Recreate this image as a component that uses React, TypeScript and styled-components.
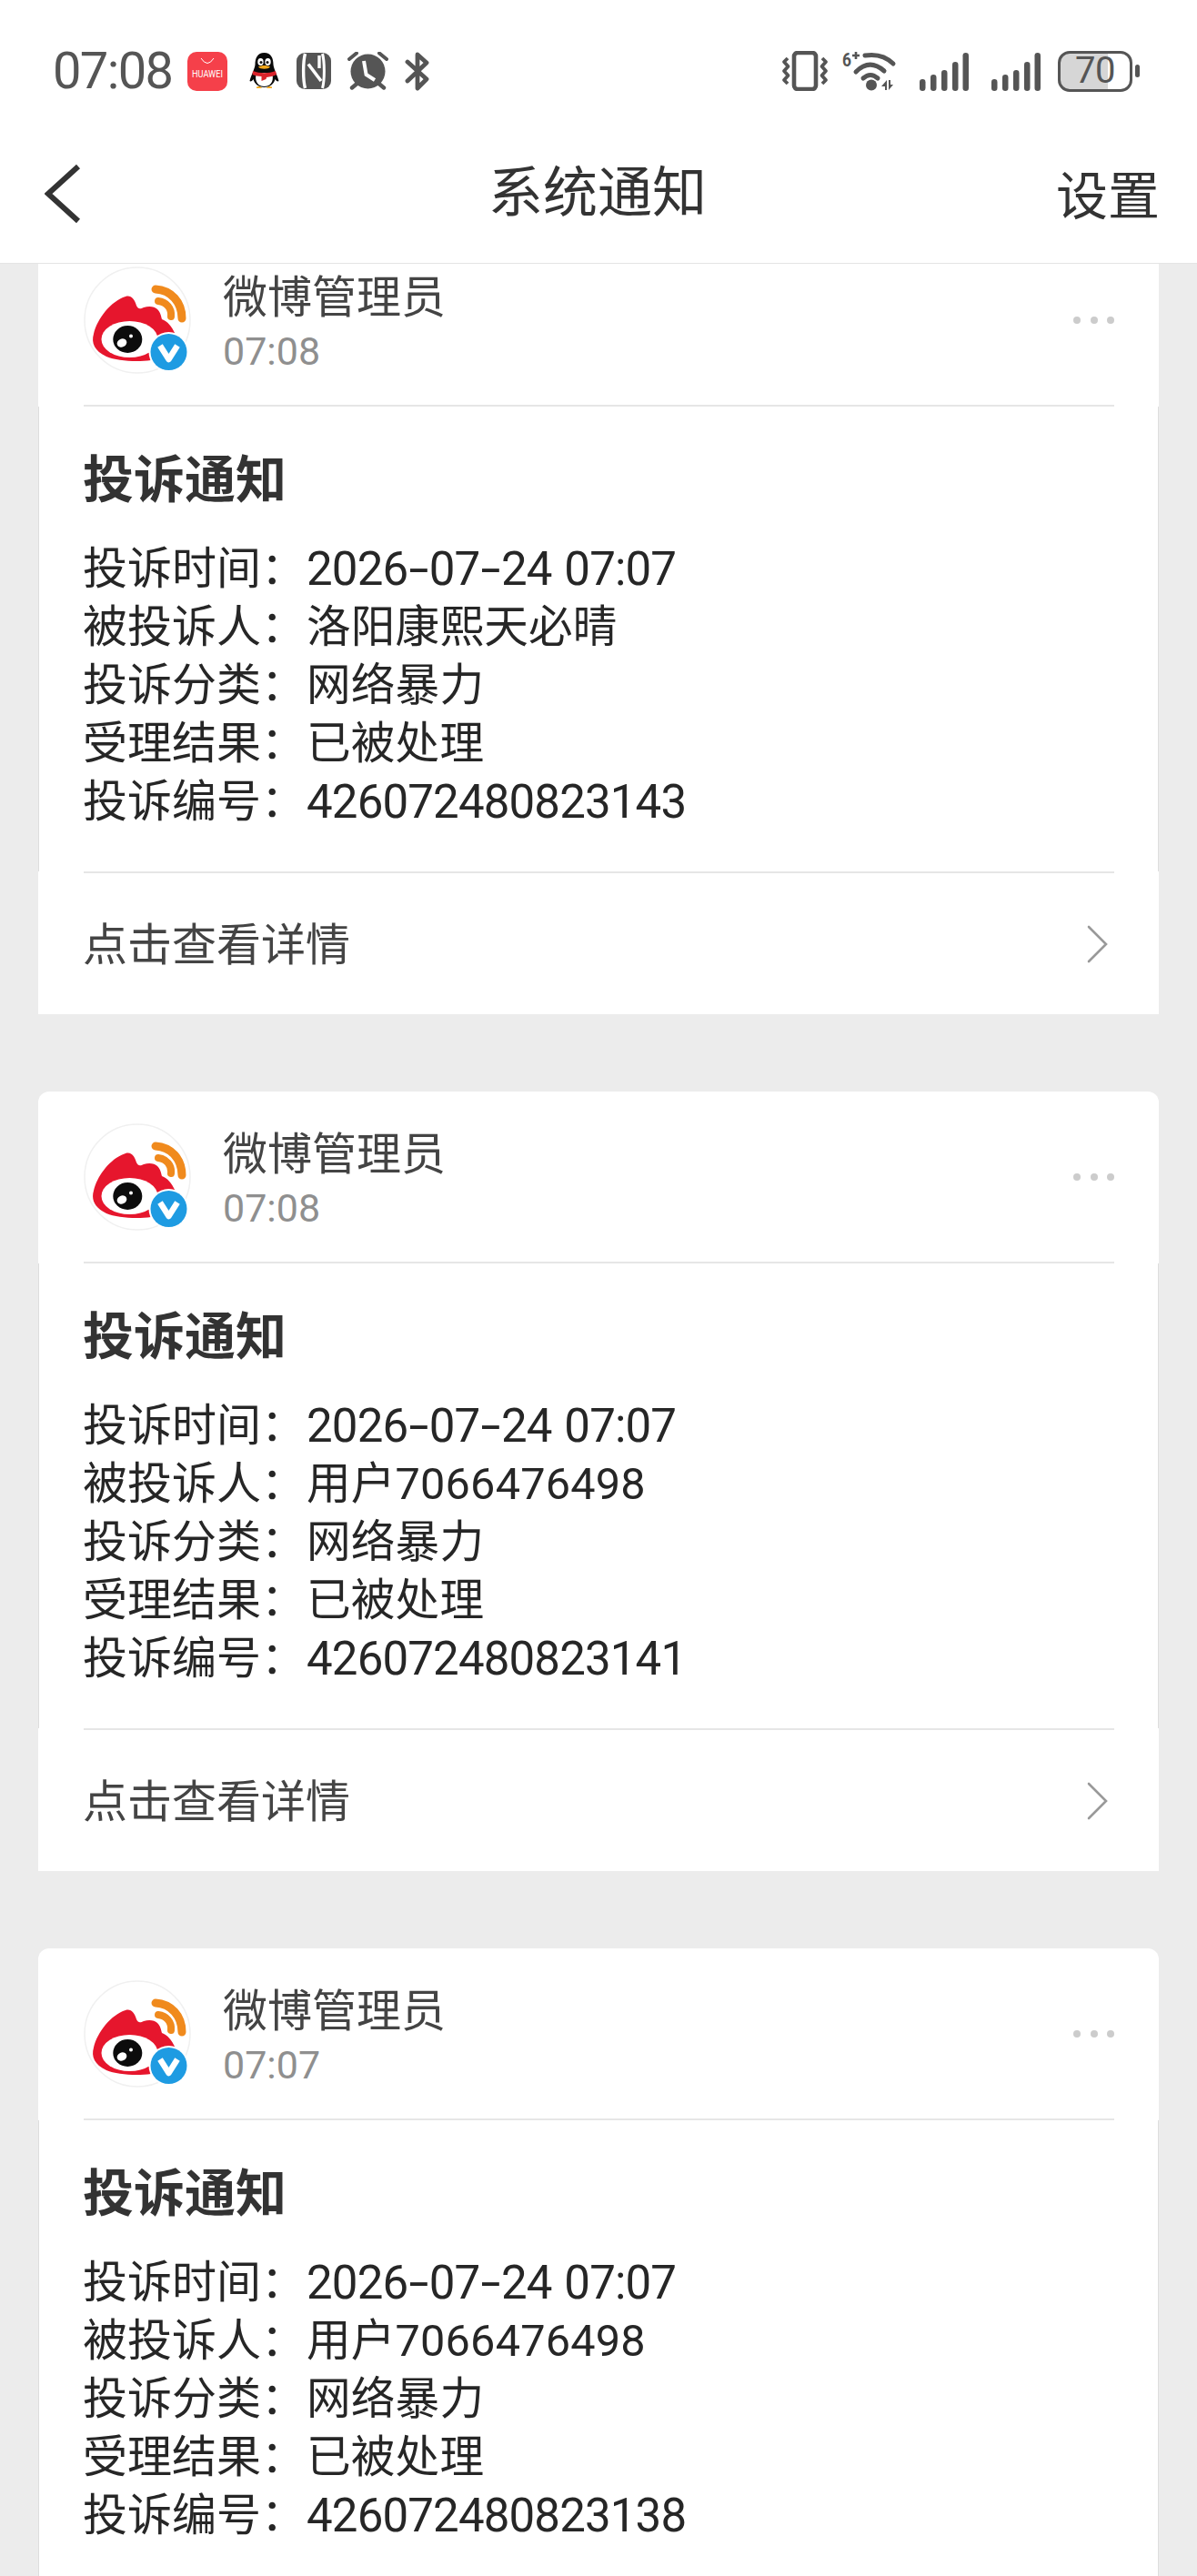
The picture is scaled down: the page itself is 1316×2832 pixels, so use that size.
import React from "react";
import styled, { createGlobalStyle } from "styled-components";

const ink = "#555555";

const GlobalStyle = createGlobalStyle`
  html, body {
    margin: 0;
    padding: 0;
    background: #ececec;
  }
  * {
    box-sizing: border-box;
  }
`;

const Page = styled.div`
  width: 1316px;
  height: 2832px;
  overflow: hidden;
  background: #ececec;
  font-family: Roboto, "Noto Sans CJK SC", sans-serif;
  color: #333333;
`;

const TopBar = styled.header`
  position: relative;
  z-index: 2;
  background: #ffffff;
  border-bottom: 1px solid #e4e4e4;
`;

const StatusBar = styled.div`
  display: flex;
  align-items: center;
  justify-content: space-between;
  height: 156px;
  padding: 0 63px 0 58px;
`;

const StatusGroup = styled.div`
  display: flex;
  align-items: center;
`;

const Clock = styled.span`
  width: 148px;
  font-size: 56px;
  line-height: 1;
  letter-spacing: -1.6px;
  color: ${ink};
`;

const StatusIcon = styled.svg<{ $gap?: number }>`
  display: block;
  flex: none;
  margin-left: ${({ $gap }) => $gap ?? 0}px;
`;

const Battery = styled.div<{ $level: number }>`
  display: flex;
  align-items: center;
  justify-content: center;
  width: 82px;
  height: 45px;
  margin-left: 19px;
  border: 3.5px solid ${ink};
  border-radius: 13px;
  background: linear-gradient(
    to right,
    #d6d6d6 ${({ $level }) => $level}%,
    #ffffff ${({ $level }) => $level}%
  );
  font-size: 40px;
  line-height: 1;
  letter-spacing: -0.5px;
  color: ${ink};
`;

const BatteryCap = styled.div`
  width: 5px;
  height: 14px;
  margin-left: 3px;
  border-radius: 3px;
  background: ${ink};
`;

const Nav = styled.nav`
  display: grid;
  grid-template-columns: 1fr auto 1fr;
  align-items: center;
  height: 133px;
  padding: 0 51px 20px 49px;
`;

const NavTitle = styled.h1`
  margin: 0;
  font-size: 60px;
  line-height: 1;
  font-weight: 400;
  color: #333333;
`;

const NavAction = styled.span`
  justify-self: end;
  margin: 8px -10px 0 0;
  font-size: 57px;
  line-height: 1;
  color: #333333;
`;

const CardList = styled.main`
  display: flex;
  flex-direction: column;
  gap: 85px;
  margin-top: -32px;
  padding: 0 42px;
`;

const Card = styled.article`
  width: 1232px;
  background: #ffffff;
  border-radius: 12px 12px 0 0;
`;

const CardHead = styled.div`
  display: flex;
  align-items: flex-start;
  height: 187px;
  padding: 35px 49px 0 50px;
`;

const Sender = styled.div`
  display: flex;
  flex-direction: column;
  margin-left: 35px;
  flex: 1;
`;

const SenderName = styled.span`
  margin-top: 7px;
  font-size: 49px;
  line-height: 56px;
  color: #444444;
`;

const SendTime = styled.span`
  font-size: 43px;
  line-height: 60px;
  color: #8f8f8f;
`;

const MoreDots = styled.div`
  display: flex;
  gap: 10.5px;
  margin-top: 55px;
`;

const Dot = styled.i`
  width: 8px;
  height: 8px;
  border-radius: 50%;
  background: #cccccc;
`;

const Rule = styled.hr`
  height: 2px;
  margin: 0 49px 0 50px;
  border: 0;
  background: #e6e6e6;
`;

const CardBody = styled.section`
  padding: 49px 49px 44px 48px;
  border: solid #dedede;
  border-width: 0 1px;
`;

const NoticeTitle = styled.h2`
  margin: 0 0 34px;
  font-size: 56px;
  line-height: 64px;
  font-weight: 700;
  color: #333333;
`;

const InfoRow = styled.div`
  display: flex;
  font-size: 49px;
  line-height: 64px;
  color: #262626;
`;

const InfoLabel = styled.span`
  flex: none;
  width: 246px;
`;

const InfoValue = styled.span<{ $numeric?: boolean }>`
  white-space: nowrap;
  letter-spacing: ${({ $numeric }) => ($numeric ? "-0.85px" : "0.2px")};
  word-spacing: 2px;
  font-size: ${({ $numeric }) => ($numeric ? 51 : 48.6)}px;
`;

const DateDash = styled.span`
  display: inline-block;
  width: 23.5px;
  text-align: center;
  transform: scaleX(1.55);
`;

const CardFoot = styled.div`
  display: flex;
  align-items: center;
  justify-content: space-between;
  height: 155px;
  padding: 0 56px 0 49px;
  font-size: 49px;
  color: #444444;
`;

const FootLabel = styled.span`
  margin-bottom: 6px;
`;

const WeiboAvatar = () => (
  <svg width="118" height="118" viewBox="0 0 118 118" style={{ flex: "none" }}>
    <circle cx="59" cy="59" r="58" fill="#ffffff" stroke="#f0f0f0" strokeWidth="1.5" />
    <path
      d="M46 33C52 31 56 36 58 43 60 47 62 47 66 45 72 43 78 44 81 47 85 51 85 55 86 58 92 60 97 66 100 73L88 100C70 106 40 105 25 99 12 93 8 84 11 74 15 57 30 38 46 33z"
      fill="#e6162d"
    />
    <ellipse cx="50.5" cy="80" rx="31" ry="20" fill="#ffffff" />
    <ellipse cx="48.3" cy="80" rx="16" ry="15" fill="#0c0c0c" />
    <ellipse cx="42" cy="84" rx="5.5" ry="4.5" transform="rotate(-25 42 84)" fill="#ffffff" />
    <circle cx="52" cy="76.5" r="2" fill="#ffffff" />
    <path d="M79 25c17 1 29 14 29 32" fill="none" stroke="#f08a1d" strokeWidth="9" strokeLinecap="round" />
    <path d="M82 38c9 1 15 8 14 17" fill="none" stroke="#f08a1d" strokeWidth="8" strokeLinecap="round" />
    <circle cx="93.5" cy="94" r="22" fill="#ffffff" />
    <circle cx="93.5" cy="94" r="20" fill="#1e9be2" />
    <path d="M84 87l9.5 15 9.5-15" fill="none" stroke="#ffffff" strokeWidth="6.5" strokeLinejoin="round" />
  </svg>
);

const ChevronRight = () => (
  <svg width="24" height="42" viewBox="0 0 24 42">
    <path d="M3 2l19 19L3 40" fill="none" stroke="#999999" strokeWidth="2.6" strokeLinecap="round" />
  </svg>
);

const HuaweiIcon = () => (
  <StatusIcon width="44" height="43" viewBox="0 0 44 43">
    <rect width="44" height="43" rx="10" fill="#f5404a" />
    <path d="M15 7Q22 18 29 7" fill="none" stroke="#ffffff" strokeWidth="1" />
    <text x="5" y="28" fontSize="10" fontFamily="Roboto, sans-serif" fill="#ffffff" textLength="34" lengthAdjust="spacingAndGlyphs">
      HUAWEI
    </text>
  </StatusIcon>
);

const QQIcon = () => (
  <StatusIcon $gap={24} width="33" height="40" viewBox="0 0 33 40">
    <path d="M16.5 0C9 0 6.5 6 6.5 13 6 18 2 25 .5 31c1 1 3 0 4-2 1 5 6 9 12 9s11-4 12-9c1 2 3 3 4 2-1.5-6-5.5-13-6-18C26.5 6 24 0 16.5 0z" fill="#0a0a0a" />
    <path d="M8 22c-2 6-1 15 8.500 15S27 28 25 22z" fill="#ffffff" />
    <ellipse cx="12.500" cy="10" rx="3.200" ry="4" fill="#ffffff" />
    <ellipse cx="20.500" cy="10" rx="3.200" ry="4" fill="#ffffff" />
    <circle cx="13" cy="10.500" r="1.500" fill="#111111" />
    <circle cx="20" cy="10.500" r="1.500" fill="#111111" />
    <path d="M10 15.500c4-2 9-2 13 0-2 3-11 3-13 0z" fill="#f4a81c" />
    <path d="M4 20c8 3 17 3 25 0l1 4c-4 2-7 2.500-11 3l-.5 2-5 2v-5c-4 0-7-1-10-2z" fill="#d9232b" />
    <path d="M8 37.500c2-1 5-1 6 1.500H8zM25 37.500c-2-1-5-1-6 1.500h6z" fill="#f4a81c" />
  </StatusIcon>
);

const NfcIcon = () => (
  <StatusIcon $gap={19} width="38" height="40" viewBox="0 0 38 40">
    <rect width="38" height="40" rx="9" fill={ink} />
    <path d="M9.500 1C7 10 7 30 9.500 39" fill="none" stroke="#ffffff" strokeWidth="3.400" />
    <path d="M28.500 1c2.500 9 2.500 29 0 38" fill="none" stroke="#ffffff" strokeWidth="3" />
    <path d="M13 12.500L27 31" fill="none" stroke="#ffffff" strokeWidth="3.600" />
    <path d="M25 3v14" fill="none" stroke="#ffffff" strokeWidth="3.400" />
  </StatusIcon>
);

const AlarmIcon = () => (
  <StatusIcon $gap={18} width="45" height="42" viewBox="0 0 45 42">
    <circle cx="22.500" cy="21.500" r="19" fill={ink} />
    <path d="M18 10l2.600 15L30 31" fill="none" stroke="#ffffff" strokeWidth="4" />
    <path d="M2 8l8-6.500M43 8l-8-6.500" fill="none" stroke={ink} strokeWidth="4" strokeLinecap="round" />
    <path d="M5 39.500l6-5M40 39.500l-6-5" fill="none" stroke={ink} strokeWidth="4.400" strokeLinecap="round" />
  </StatusIcon>
);

const BluetoothIcon = () => (
  <StatusIcon $gap={18} width="27" height="43" viewBox="0 0 27 43">
    <path
      d="M3 11l21 19-10 10V3l10 9L3 32"
      fill="none"
      stroke={ink}
      strokeWidth="4.800"
      strokeLinecap="round"
      strokeLinejoin="round"
    />
  </StatusIcon>
);

const VibrateIcon = () => (
  <StatusIcon width="52" height="44" viewBox="0 0 52 44">
    <rect x="14" y="2" width="24" height="40" rx="4" fill="none" stroke={ink} strokeWidth="4.600" />
    <path d="M7 8L3 12l4.500 5L3 22l4.500 5L3 32l4 4" fill="none" stroke={ink} strokeWidth="3.800" strokeLinejoin="round" />
    <path d="M45 8l4 4-4.500 5 4.500 5-4.500 5 4.500 5-4 4" fill="none" stroke={ink} strokeWidth="3.800" strokeLinejoin="round" />
  </StatusIcon>
);

const WifiIcon = () => (
  <StatusIcon $gap={15} width="60" height="46" viewBox="0 0 60 46">
    <text x="0" y="18" fontSize="20" fontWeight="700" fontFamily="Roboto, sans-serif" fill={ink} textLength="10" lengthAdjust="spacingAndGlyphs">
      6
    </text>
    <path d="M15 2v8M11 6h8" stroke={ink} strokeWidth="2.600" />
    <path d="M25 6Q44 3 56 15" fill="none" stroke={ink} strokeWidth="5" strokeLinecap="round" />
    <path d="M15 24Q30 9 46 23" fill="none" stroke={ink} strokeWidth="5" strokeLinecap="round" />
    <path d="M23 31Q31 24 39 31" fill="none" stroke={ink} strokeWidth="5" strokeLinecap="round" />
    <circle cx="32" cy="38.500" r="6" fill={ink} />
    <path d="M49 33v11h-2v-4h-4zM51 33v11l5-6h-3v-5z" fill={ink} />
  </StatusIcon>
);

const SignalIcon = ({ gap }: { gap: number }) => (
  <StatusIcon $gap={gap} width="54" height="43" viewBox="0 0 54 43">
    {[
      [0, 13],
      [12, 18],
      [24, 23],
      [36, 32],
      [47.5, 42],
    ].map(([x, h]) => (
      <rect key={x} x={x} y={43 - h} width="6.500" height={h} rx="3.200" fill={ink} />
    ))}
  </StatusIcon>
);

// the dashes of a date are drawn wider than the font's hyphen
const DateText = ({ value }: { value: string }) => {
  const parts = value.split("-");
  return (
    <>
      {parts.map((part, i) => (
        <React.Fragment key={part}>
          {i > 0 && <DateDash>-</DateDash>}
          {part}
        </React.Fragment>
      ))}
    </>
  );
};

const notices = [
  { time: "07:08", target: "洛阳康熙天必晴", code: "426072480823143", showFoot: true },
  { time: "07:08", target: "用户7066476498", code: "426072480823141", showFoot: true },
  // last card runs off the bottom of the screen
  { time: "07:07", target: "用户7066476498", code: "426072480823138", showFoot: false },
];

export default function App() {
  return (
    <Page>
      <GlobalStyle />
      <TopBar>
        <StatusBar>
          <StatusGroup>
            <Clock>07:08</Clock>
            <HuaweiIcon />
            <QQIcon />
            <NfcIcon />
            <AlarmIcon />
            <BluetoothIcon />
          </StatusGroup>
          <StatusGroup>
            <VibrateIcon />
            <WifiIcon />
            <SignalIcon gap={25} />
            <SignalIcon gap={25} />
            <Battery $level={68}>70</Battery>
            <BatteryCap />
          </StatusGroup>
        </StatusBar>
        <Nav>
          <svg width="40" height="66" viewBox="0 0 40 66">
            <path d="M37 3L4 33l33 30" fill="none" stroke="#333333" strokeWidth="6" />
          </svg>
          <NavTitle>系统通知</NavTitle>
          <NavAction>设置</NavAction>
        </Nav>
      </TopBar>
      <CardList>
        {notices.map((notice) => (
          <Card key={notice.code}>
            <CardHead>
              <WeiboAvatar />
              <Sender>
                <SenderName>微博管理员</SenderName>
                <SendTime>{notice.time}</SendTime>
              </Sender>
              <MoreDots>
                <Dot />
                <Dot />
                <Dot />
              </MoreDots>
            </CardHead>
            <Rule />
            <CardBody>
              <NoticeTitle>投诉通知</NoticeTitle>
              <InfoRow>
                <InfoLabel>投诉时间：</InfoLabel>
                <InfoValue $numeric>
                  <DateText value="2026-07-24 07:07" />
                </InfoValue>
              </InfoRow>
              <InfoRow>
                <InfoLabel>被投诉人：</InfoLabel>
                <InfoValue>{notice.target}</InfoValue>
              </InfoRow>
              <InfoRow>
                <InfoLabel>投诉分类：</InfoLabel>
                <InfoValue>网络暴力</InfoValue>
              </InfoRow>
              <InfoRow>
                <InfoLabel>受理结果：</InfoLabel>
                <InfoValue>已被处理</InfoValue>
              </InfoRow>
              <InfoRow>
                <InfoLabel>投诉编号：</InfoLabel>
                <InfoValue $numeric>{notice.code}</InfoValue>
              </InfoRow>
            </CardBody>
            {notice.showFoot && (
              <>
                <Rule />
                <CardFoot>
                  <FootLabel>点击查看详情</FootLabel>
                  <ChevronRight />
                </CardFoot>
              </>
            )}
          </Card>
        ))}
      </CardList>
    </Page>
  );
}
